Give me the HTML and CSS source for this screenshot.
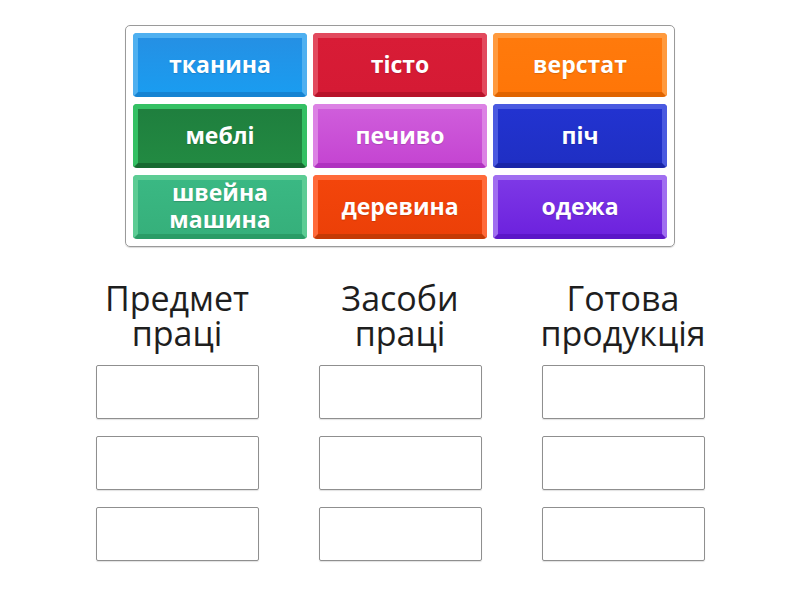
FILE: index.html
```html
<!DOCTYPE html>
<html lang="uk">
<head>
<meta charset="utf-8">
<title>Групування</title>
<link rel="stylesheet" href="styles.css">
</head>
<body>
<div class="page">
  <div class="bank">
    <div class="tile c-blue"><span>тканина</span></div>
    <div class="tile c-red"><span>тісто</span></div>
    <div class="tile c-orange"><span>верстат</span></div>
    <div class="tile c-green"><span>меблі</span></div>
    <div class="tile c-pink"><span>печиво</span></div>
    <div class="tile c-navy"><span>піч</span></div>
    <div class="tile c-teal"><span>швейна машина</span></div>
    <div class="tile c-rust"><span>деревина</span></div>
    <div class="tile c-purple"><span>одежа</span></div>
  </div>
  <div class="groups">
    <div class="group">
      <div class="title">Предмет праці</div>
      <div class="slot"></div>
      <div class="slot"></div>
      <div class="slot"></div>
    </div>
    <div class="group">
      <div class="title">Засоби праці</div>
      <div class="slot"></div>
      <div class="slot"></div>
      <div class="slot"></div>
    </div>
    <div class="group">
      <div class="title">Готова продукція</div>
      <div class="slot"></div>
      <div class="slot"></div>
      <div class="slot"></div>
    </div>
  </div>
</div>
</body>
</html>
```
FILE: styles.css
```css
html, body {
  margin: 0;
  padding: 0;
  background: #ffffff;
}
body {
  font-family: "Open Sans", "Noto Sans", sans-serif;
  width: 800px;
  height: 600px;
  overflow: hidden;
}
.page {
  display: flex;
  flex-direction: column;
  align-items: center;
  padding-top: 25px;
}
.bank {
  width: 534px;
  padding: 7px;
  border: 1px solid #9a9a9a;
  border-radius: 5px;
  display: grid;
  grid-template-columns: repeat(3, 174px);
  grid-auto-rows: 64px;
  column-gap: 6px;
  row-gap: 7px;
  box-shadow: 0 1px 1px rgba(0,0,0,0.15);
}
.tile {
  border-radius: 4px;
  border-style: solid;
  border-width: 5px 5px 5px 5px;
  border-color: var(--light) var(--light) var(--dark) var(--light);
  background: linear-gradient(to bottom, var(--top), var(--bottom));
  display: flex;
  align-items: center;
  justify-content: center;
  text-align: center;
  color: #ffffff;
  font-weight: 700;
  font-size: 23px;
  line-height: 27px;
  padding-bottom: 2px;
  box-sizing: border-box;
}
.tile span {
  display: block;
  padding: 0 4px;
  text-shadow: 0 1px 1px rgba(0,0,0,0.15);
}
.c-blue   { --light: #4fb0f0; --dark: #1583d2; --top: #2590e4; --bottom: #1a9cf0; }
.c-red    { --light: #e24a5e; --dark: #b81229; --top: #d81c36; --bottom: #d51a34; }
.c-orange { --light: #ff9a3e; --dark: #e06400; --top: #ff7a0c; --bottom: #ff7608; }
.c-green  { --light: #34c063; --dark: #176a31; --top: #1f7f3e; --bottom: #228a42; }
.c-pink   { --light: #dc82e4; --dark: #b032c0; --top: #cf5ddb; --bottom: #c545d2; }
.c-navy   { --light: #4a5ae0; --dark: #1a26a8; --top: #2233d0; --bottom: #1f2fc4; }
.c-teal   { --light: #5ccc94; --dark: #2a9c66; --top: #3ab883; --bottom: #36b07b; }
.c-rust   { --light: #ff6a3a; --dark: #c43a06; --top: #f3450b; --bottom: #ec4008; }
.c-purple { --light: #a06ef0; --dark: #5c16c8; --top: #7d38e6; --bottom: #6d22de; }

.groups {
  margin-top: 34px;
  display: grid;
  grid-template-columns: repeat(3, 163px);
  column-gap: 60px;
  align-items: start;
}
.group {
  display: flex;
  flex-direction: column;
  align-items: center;
}
.title {
  font-size: 34px;
  line-height: 35px;
  color: #1e1e1e;
  text-align: center;
  width: 175px;
  margin-bottom: 14px;
}
.slot {
  width: 163px;
  height: 54px;
  box-sizing: border-box;
  border: 1px solid #8f8f8f;
  border-radius: 2px;
  margin-bottom: 17px;
  box-shadow: 0 1px 1px rgba(0,0,0,0.12);
}
```
